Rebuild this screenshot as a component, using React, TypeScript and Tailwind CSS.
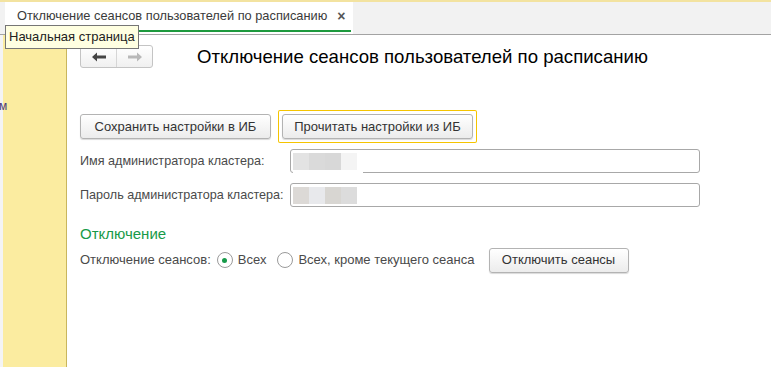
import React from 'react';

const font = { fontFamily: '"Liberation Sans", Arial, sans-serif' };

const Btn: React.FC<{ children: React.ReactNode; className?: string }> = ({ children, className }) => (
  <button
    className={`h-[25px] rounded-[3px] border border-[#b3b3b3] bg-gradient-to-b from-white to-[#ececec] text-[13px] text-[#333] shadow-[0_1px_1px_rgba(0,0,0,0.15)] ${className ?? ''}`}
  >
    {children}
  </button>
);

const Radio: React.FC<{ checked?: boolean }> = ({ checked }) => (
  <span className="flex h-[16px] w-[16px] items-center justify-center rounded-full border border-[#9a9a9a] bg-white">
    {checked && <span className="h-[5px] w-[5px] rounded-full bg-[#179a4a]" />}
  </span>
);

const Field: React.FC<{ label: string; blocks: string[]; under?: boolean }> = ({ label, blocks, under }) => (
  <div className="flex items-center">
    <span className="w-[210px] whitespace-nowrap text-[12.6px] text-[#4a4a4a]">{label}</span>
    <div className="relative flex h-[24px] w-[410px] items-center rounded-[3px] border border-[#a8a8a8] bg-white pl-[2px]">
      {blocks.map((c, i) => (
        <span key={i} className="h-[17px] w-[16px]" style={{ background: c }} />
      ))}
      {under && <span className="absolute left-[2px] top-[21px] h-[9px] w-[70px] bg-white" />}
    </div>
  </div>
);

export default function App() {
  return (
    <div className="relative flex h-[367px] w-[771px] flex-col overflow-hidden bg-white" style={font}>
      <div className="flex h-[35px] shrink-0 border-t-2 border-b border-t-[#f3e3a0] border-b-[#a3a3a3] bg-[#f2f2f2]">
        <div className="ml-[5px] flex h-full w-[348px] flex-col bg-white">
          <div className="flex flex-1 items-center pl-[12px] text-[12.8px] text-[#3a3a3a]">
            <span>Отключение сеансов пользователей по расписанию</span>
            <span className="ml-[10px] text-[14px] font-bold text-[#555]">×</span>
          </div>
          <div className="mb-[2px] h-[2px] w-[346px] bg-[#1d9a3e]" />
        </div>
      </div>

      <div className="flex flex-1">
        <div className="w-[3px] bg-[#f4f4f4]" />
        <div className="relative w-[64px] border-r border-[#c9b65c] bg-[#fbeca0]">
          <span className="absolute left-[-4px] top-[62px] text-[12px] text-[#4a3a7a]">м</span>
        </div>

        <div className="flex flex-1 flex-col pl-[13px] pt-[8px]">
          <div className="flex items-center">
            <div className="flex h-[23px] w-[73px] rounded-[3px] border border-[#c4c4c4] bg-gradient-to-b from-white to-[#f0f0f0]">
              <div className="flex w-[36px] items-center justify-center border-r border-[#d6d6d6]">
                <svg width="14" height="10" viewBox="0 0 14 10">
                  <path d="M0 5 L5 0.5 L5 3.5 L14 3.5 L14 6.5 L5 6.5 L5 9.5 Z" fill="#444" />
                </svg>
              </div>
              <div className="flex flex-1 items-center justify-center">
                <svg width="14" height="10" viewBox="0 0 14 10">
                  <path d="M14 5 L9 0.5 L9 3.5 L0 3.5 L0 6.5 L9 6.5 L9 9.5 Z" fill="#b8b8b8" />
                </svg>
              </div>
            </div>
            <h1 className="ml-[44px] text-[18.6px] text-black">Отключение сеансов пользователей по расписанию</h1>
          </div>

          <div className="mt-[39px] flex items-center gap-[7px]">
            <Btn className="w-[191px]">Сохранить настройки в ИБ</Btn>
            <div className="rounded-[2px] bg-[#f5c400] p-[1px]">
              <div className="rounded-[1px] bg-white p-[3px]">
                <Btn className="w-[191px]">Прочитать настройки из ИБ</Btn>
              </div>
            </div>
          </div>

          <div className="mt-[6px] flex flex-col gap-[10px]">
            <Field label="Имя администратора кластера:" blocks={['#e3e3e3', '#dadada', '#d8d8d8', '#f4f4f4']} under />
            <Field label="Пароль администратора кластера:" blocks={['#dcd9d6', '#e8e9ec', '#d8d6d2', '#dcdcdc']} />
          </div>

          <div className="mt-[16px] text-[15px] text-[#189a48]">Отключение</div>

          <div className="mt-[2px] flex items-center text-[13px] text-[#4a4a4a]">
            <span>Отключение сеансов:</span>
            <span className="ml-[6px] flex items-center gap-[5px]">
              <Radio checked />
              <span>Всех</span>
            </span>
            <span className="ml-[11px] flex items-center gap-[5px]">
              <Radio />
              <span>Всех, кроме текущего сеанса</span>
            </span>
            <Btn className="ml-[14px] w-[140px]">Отключить сеансы</Btn>
          </div>
        </div>
      </div>

      <div className="absolute left-[5px] top-[25px] border border-[#767676] bg-[#ffffe1] px-[3px] py-[1px] text-[13px] text-[#222]">
        Начальная страница
      </div>
    </div>
  );
}
